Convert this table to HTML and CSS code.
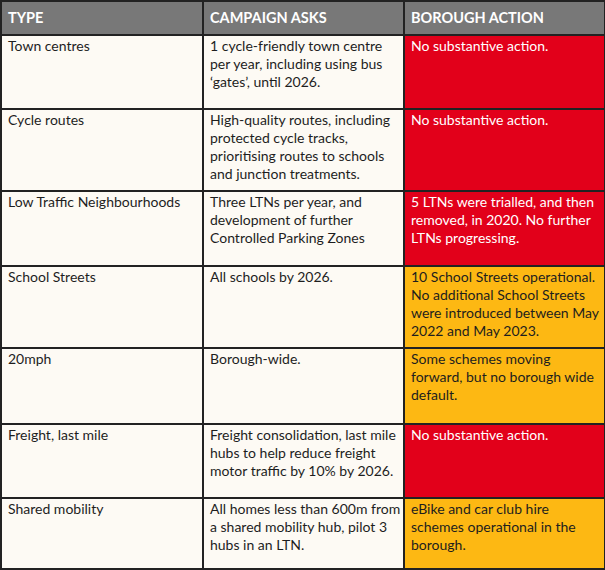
FILE: index.html
```html
<!DOCTYPE html>
<html>
<head>
<meta charset="utf-8">
<link rel="stylesheet" href="styles.css">
</head>
<body>
<table class="status">
  <colgroup>
    <col class="c-type">
    <col class="c-ask">
    <col class="c-action">
  </colgroup>
  <thead>
    <tr class="head">
      <th>TYPE</th>
      <th>CAMPAIGN ASKS</th>
      <th>BOROUGH ACTION</th>
    </tr>
  </thead>
  <tbody>
    <tr class="r1">
      <td>Town centres</td>
      <td>1 cycle-friendly town centre<br>per year, including using bus<br>‘gates’, until 2026.</td>
      <td class="red">No substantive action.</td>
    </tr>
    <tr class="r2">
      <td>Cycle routes</td>
      <td>High-quality routes, including<br>protected cycle tracks,<br>prioritising routes to schools<br>and junction treatments.</td>
      <td class="red">No substantive action.</td>
    </tr>
    <tr class="r3">
      <td>Low Traffic Neighbourhoods</td>
      <td>Three LTNs per year, and<br>development of further<br>Controlled Parking Zones</td>
      <td class="red">5 LTNs were trialled, and then<br>removed, in 2020. No further<br>LTNs progressing.</td>
    </tr>
    <tr class="r4">
      <td>School Streets</td>
      <td>All schools by 2026.</td>
      <td class="amber">10 School Streets operational.<br>No additional School Streets<br>were introduced between May<br>2022 and May 2023.</td>
    </tr>
    <tr class="r5">
      <td>20mph</td>
      <td>Borough-wide.</td>
      <td class="amber">Some schemes moving<br>forward, but no borough wide<br>default.</td>
    </tr>
    <tr class="r6">
      <td>Freight, last mile</td>
      <td>Freight consolidation, last mile<br>hubs to help reduce freight<br>motor traffic by 10% by 2026.</td>
      <td class="red">No substantive action.</td>
    </tr>
    <tr class="r7">
      <td>Shared mobility</td>
      <td>All homes less than 600m from<br>a shared mobility hub, pilot 3<br>hubs in an LTN.</td>
      <td class="amber">eBike and car club hire<br>schemes operational in the<br>borough.</td>
    </tr>
  </tbody>
</table>
</body>
</html>
```
FILE: styles.css
```css
html, body {
  margin: 0;
  padding: 0;
  background: #ffffff;
}
.status {
  border-collapse: collapse;
  table-layout: fixed;
  width: 604px;
  font-family: Lato, "Liberation Sans", sans-serif;
  font-size: 14px;
  line-height: 18px;
  color: #1e1e1e;
}
.c-type { width: 202px; }
.c-ask { width: 201px; }
.c-action { width: 201px; }
.status th,
.status td {
  border: 2px solid #222222;
  padding: 1px 4px 0 6px;
  vertical-align: top;
  text-align: left;
  background: #fdfaf4;
  box-sizing: border-box;
  white-space: nowrap;
  overflow: hidden;
}
.status th {
  background: #787878;
  color: #ffffff;
  font-weight: bold;
  font-size: 14.5px;
  vertical-align: middle;
  padding-top: 0;
  height: 34px;
}
.status td.red {
  background: #e2001a;
  color: #ffffff;
}
.status td.amber {
  background: #fdb813;
  color: #1e1e1e;
}
.r1 td { height: 74px; }
.r2 td { height: 82px; }
.r3 td { height: 75px; }
.r4 td { height: 82px; }
.r5 td { height: 76px; }
.r6 td { height: 74px; }
.r7 td { height: 71px; }
```
